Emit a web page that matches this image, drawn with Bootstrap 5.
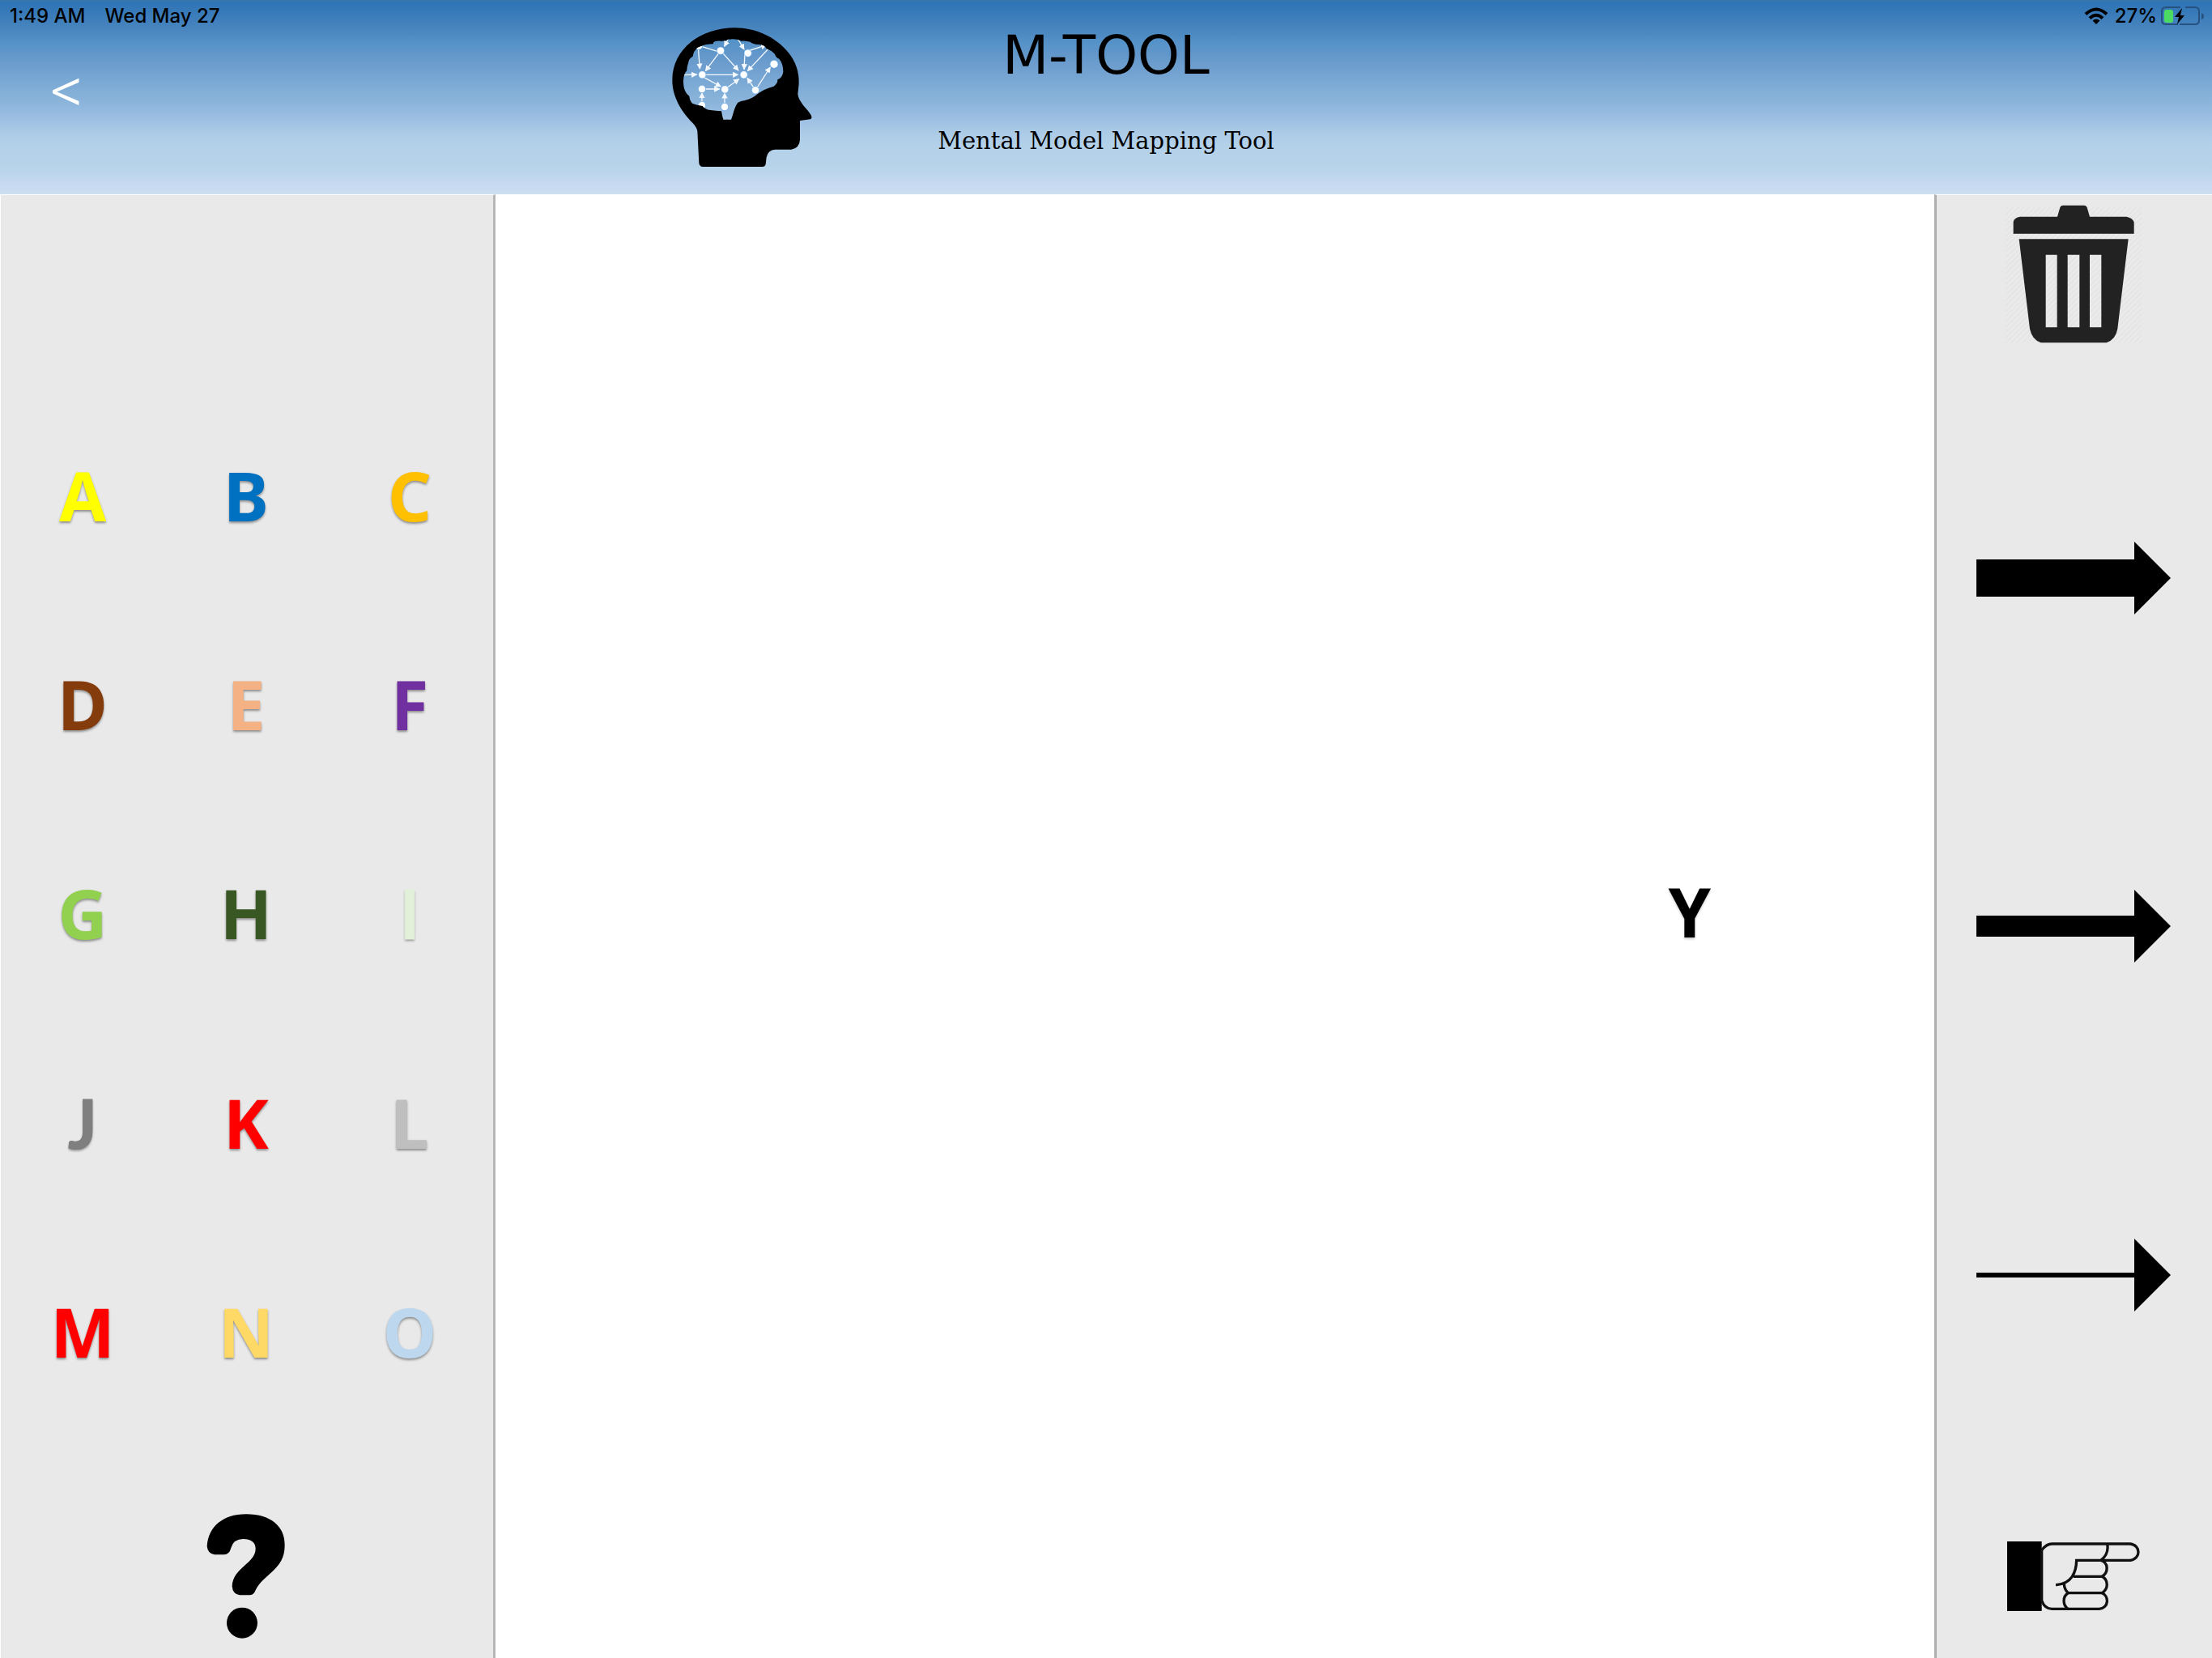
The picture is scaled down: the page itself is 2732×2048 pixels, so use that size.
<!DOCTYPE html>
<html lang="en">
<head>
<meta charset="utf-8">
<meta name="viewport" content="width=device-width, initial-scale=1">
<title>M-TOOL</title>
<link href="https://cdn.jsdelivr.net/npm/bootstrap@5.3.0/dist/css/bootstrap.min.css" rel="stylesheet">
<style>
body { font-family: Inter, "Liberation Sans", sans-serif; color: #000; background: #fff; }
svg { display: block; }
.app-head {
  height: 240px;
  background: linear-gradient(#3a75a8 0, #2e74b6 3px, #4a86bf 38px, #5592c8 52px, #6598cb 70px, #7aa8d4 100px, #8ab4da 125px, #9bbee2 145px, #abcae6 163px, #b4d1ea 180px, #b6d3ea 205px, #c3d8ef 222px, #c8daf1 232px, #cbe0ef 240px);
}
.statusbar { font-size: 24px; line-height: 40px; padding: 0 10px 0 12px; font-weight: 500; }
.head-grid { display: grid; grid-template-columns: 1fr 500px 1fr; margin-top: -8px; }
.back-btn { font-family: Roboto, sans-serif; font-weight: 300; font-size: 80px; line-height: 80px; color: #fff; margin: 40px 0 0 62px; }
.logo { width: 175px; margin-right: 112px; }
.app-title { font-family: "DejaVu Sans", sans-serif; font-size: 66px; line-height: 74px; margin: 0 0 48px; }
.app-sub { font-family: "DejaVu Serif", serif; font-size: 29px; line-height: 40px; margin: 0; }
.side { background: #e9e9e9; display: grid; border-top: 1px solid #fff; }
.palette { width: 612px; grid-template-rows: 1fr 5fr 1fr; border-left: 1px solid #fff; border-right: 3px solid #b7b7b7; padding-right: 2px; }
.tools { width: 343px; grid-template-rows: 1fr 5fr 1fr; border-left: 3px solid #aeaeae; padding-right: 2px; }
.letters { display: grid; grid-template: repeat(5, 1fr) / repeat(3, 1fr); margin-top: -16px; margin-bottom: 16px; }
.arrows { display: grid; grid-template-rows: repeat(3, 1fr); }
.node { font-family: "Noto Sans", "Open Sans", sans-serif; font-weight: 700; font-size: 84px; line-height: 84px; background: none; border: 0; padding: 0; text-shadow: 0 2px 3px rgba(0,0,0,.4); }
.node-hook { font-family: Lato, sans-serif; -webkit-text-stroke: 1px; }
.target { left: 83%; top: 49%; transform: translate(-50%, -50%); text-shadow: 0 2px 3px rgba(0,0,0,.2); }
.tool { background: none; border: 0; padding: 0; }
.foot { padding-bottom: 16px; }
</style>
</head>
<body>
<div class="d-flex flex-column vh-100 overflow-hidden">
<header class="app-head flex-shrink-0">
  <div class="statusbar d-flex justify-content-between">
    <div class="d-flex gap-4"><span>1:49 AM</span><span>Wed May 27</span></div>
    <div class="d-flex align-items-center">
      <svg class="me-2" width="30" height="22" viewBox="0 0 30 22" fill="none" stroke="#000" stroke-width="4"><path d="M2 8.500Q15-3.500 28 8.500M7 13.500Q15 6 23 13.500"/><path d="M15 21l-4.500-4.500q4.500-4 9 0z" fill="#000" stroke="none"/></svg>
      <span class="me-1">27%</span>
      <svg width="54" height="26" viewBox="0 0 54 26"><path d="M25 2H7Q2 2 2 7v11q0 5 5 5h15M31 2h12q5 0 5 5v11q0 5-5 5H24" fill="none" stroke="#27527f" stroke-width="2"/><path d="M51 9q3 1 3 4t-3 4z" fill="#27527f"/><rect x="5" y="5" width="11" height="16" rx="3" fill="#4cdb62"/><path d="M27 3L18 14h5l-2 9 9-11h-5z" fill="#000"/></svg>
    </div>
  </div>
  <div class="head-grid">
    <div class="d-flex justify-content-between align-items-start">
      <button class="tool back-btn" type="button" aria-label="Back">&lt;</button>
      <svg class="logo" viewBox="85 65 525 525" aria-hidden="true">
        <defs>
          <marker id="tip" viewBox="0 0 20 20" refX="18" refY="10" markerWidth="22" markerHeight="22" markerUnits="userSpaceOnUse" orient="auto"><path d="M0 0L20 10 0 20z" fill="#f4f9ff"/></marker>
          <clipPath id="brain"><path d="M240 132Q210 132 198 140Q178 145 175 155Q168 160 165 178Q150 185 148 203Q143 218 143 230Q130 245 130 270Q130 295 138 309Q143 320 152 325Q154 345 165 353Q180 360 201 361Q210 374 230 377Q250 380 271 381L274 397 278 412H307L313 395Q320 365 332 349Q342 343 358 341Q385 335 405 317Q430 298 465 289Q480 278 479 264Q497 257 500 235Q500 205 485 187Q472 182 469 169Q455 155 438 149Q430 136 410 134Q385 133 378 124Q355 120 345 121Q325 111 297 115Q285 122 270 121Q255 120 248 122Q240 124 240 132z"/></clipPath>
        </defs>
        <path fill-rule="evenodd" d="M320 72C400 72 475 108 520 165C545 196 560 235 558 280L554 318C558 350 592 375 604 397Q608 408 600 411L562 416V487Q560 518 530 523H470Q443 525 438 552L435 578Q432 587 423 587H203Q189 587 188 573L182 456Q180 440 164 424C125 385 89 330 89 266C89 150 195 72 320 72zM240 132Q210 132 198 140Q178 145 175 155Q168 160 165 178Q150 185 148 203Q143 218 143 230Q130 245 130 270Q130 295 138 309Q143 320 152 325Q154 345 165 353Q180 360 201 361Q210 374 230 377Q250 380 271 381L274 397 278 412H307L313 395Q320 365 332 349Q342 343 358 341Q385 335 405 317Q430 298 465 289Q480 278 479 264Q497 257 500 235Q500 205 485 187Q472 182 469 169Q455 155 438 149Q430 136 410 134Q385 133 378 124Q355 120 345 121Q325 111 297 115Q285 122 270 121Q255 120 248 122Q240 124 240 132z"/>
        <g clip-path="url(#brain)">
          <g fill="none" stroke="#f4f9ff" stroke-width="4">
            <path d="M185 145L191 224" marker-end="url(#tip)"/><path d="M190 139L268 163"/><path d="M268 157L212 232" marker-end="url(#tip)"/><path d="M268 157L334 230" marker-end="url(#tip)"/><path d="M298 110L282 141" marker-end="url(#tip)"/><path d="M333 115L355 152" marker-end="url(#tip)"/><path d="M369 158L438 136" marker-end="url(#tip)"/><path d="M358 165L355 226" marker-end="url(#tip)"/><path d="M443 152L368 232" marker-end="url(#tip)"/><path d="M130 247L180 245" marker-end="url(#tip)"/><path d="M200 246H333" marker-end="url(#tip)"/><path d="M200 252L269 290" marker-end="url(#tip)"/><path d="M200 299H264" marker-end="url(#tip)"/><path d="M284 300L336 262" marker-end="url(#tip)"/><path d="M397 303L367 258" marker-end="url(#tip)"/><path d="M397 303L452 218" marker-end="url(#tip)"/><path d="M199 350V313" marker-end="url(#tip)"/><path d="M283 364V314" marker-end="url(#tip)"/>
          </g>
          <g fill="#fff" stroke="#5da4e8" stroke-width="2"><circle cx="187" cy="139" r="14"/><circle cx="268" cy="157" r="14"/><circle cx="369" cy="166" r="14"/><circle cx="466" cy="207" r="15"/><circle cx="200" cy="246" r="14"/><circle cx="354" cy="246" r="14"/><circle cx="199" cy="299" r="14"/><circle cx="284" cy="300" r="14"/><circle cx="397" cy="303" r="14"/><circle cx="199" cy="359" r="14"/><circle cx="283" cy="365" r="14"/></g>
        </g>
      </svg>
    </div>
    <div class="text-center">
      <h1 class="app-title fw-normal">M-TOOL</h1>
      <p class="app-sub">Mental Model Mapping Tool</p>
    </div>
  </div>
</header>
<main class="d-flex flex-grow-1">
  <aside class="side palette flex-shrink-0">
    <div></div>
    <div class="letters">
      <button class="node" style="color:#ffff00">A</button><button class="node" style="color:#0070c0">B</button><button class="node" style="color:#ffc000">C</button>
      <button class="node" style="color:#843c0c">D</button><button class="node" style="color:#f4b183">E</button><button class="node" style="color:#7030a0">F</button>
      <button class="node" style="color:#92d050">G</button><button class="node" style="color:#385723">H</button><button class="node node-hook" style="color:#e2f0d9">I</button>
      <button class="node node-hook" style="color:#7f7f7f">J</button><button class="node" style="color:#ff0000">K</button><button class="node" style="color:#bfbfbf">L</button>
      <button class="node" style="color:#ff0000">M</button><button class="node" style="color:#ffd966">N</button><button class="node" style="color:#bdd7ee">O</button>
    </div>
    <div class="foot d-flex justify-content-center align-items-end">
      <button class="tool" type="button" aria-label="Help"><svg width="170" height="170" viewBox="-3 68 510 510"><path d="M107 212C112 140 165 93 252 93C345 93 397 140 395 210C395 300 315 315 287 375Q280 393 265 393H228Q202 390 200 360C203 290 288 275 287 220Q285 185 241 185Q205 185 196 218Q190 243 170 243H135Q110 240 107 212z"/><circle cx="237" cy="496" r="57"/></svg></button>
    </div>
  </aside>
  <section class="flex-grow-1 position-relative" aria-label="Map">
    <button class="node target position-absolute" type="button">Y</button>
  </section>
  <aside class="side tools flex-shrink-0">
    <div class="d-flex justify-content-center align-items-start pt-2">
      <button class="tool" type="button" aria-label="Delete"><svg width="168" height="176" viewBox="292 58 504 528">
        <defs><pattern id="hatch" width="14" height="14" patternUnits="userSpaceOnUse" patternTransform="rotate(45)"><rect width="14" height="14" fill="#eaeaea"/><rect width="5" height="14" fill="#e4e4e4"/></pattern></defs>
        <rect x="292" y="78" width="504" height="504" fill="url(#hatch)"/>
        <path fill="#222" fill-rule="evenodd" d="M321 177V132Q325 117 346 114H484L494 80Q497 72 505 72H583Q591 72 594 80L604 114H740Q762 118 768 134V177zM342 197H747L707 530Q700 570 666 581H423Q390 570 382 530zM441 255V524H483V255zM522 255V524H566V255zM604 255V524H647V255z"/></svg></button>
    </div>
    <div class="arrows">
      <button class="tool d-flex justify-content-center align-items-center" type="button" aria-label="Thick arrow"><svg width="240" height="90" viewBox="0 0 240 90"><path d="M0 22H195V0L240 45 195 90V68H0z"/></svg></button>
      <button class="tool d-flex justify-content-center align-items-center" type="button" aria-label="Medium arrow"><svg width="240" height="90" viewBox="0 0 240 90"><path d="M0 32H195V0L240 45 195 90V58H0z"/></svg></button>
      <button class="tool d-flex justify-content-center align-items-center" type="button" aria-label="Thin arrow"><svg width="240" height="90" viewBox="0 0 240 90"><path d="M0 42H195V0L240 45 195 90V48H0z"/></svg></button>
    </div>
    <div class="foot d-flex justify-content-center align-items-end">
      <button class="tool" type="button" aria-label="Next"><svg width="168" height="170" viewBox="113 7 504 510"><rect x="119" y="133" width="128" height="258"/><path d="M247 165Q265 142 285 142H575C615 147 615 198 575 203H376Q375 240 360 263Q340 292 299 294M490 142Q497 180 466 203C495 210 495 250 470 263C495 275 495 310 470 324C497 335 497 380 460 383H285Q258 383 247 352V165M365 263H470M330 288Q330 310 345 324H470M345 324C325 335 323 370 345 383" fill="none" stroke="#111" stroke-width="10"/></svg></button>
    </div>
  </aside>
</main>
</div>
<script src="https://cdn.jsdelivr.net/npm/bootstrap@5.3.0/dist/js/bootstrap.bundle.min.js"></script>
</body>
</html>
